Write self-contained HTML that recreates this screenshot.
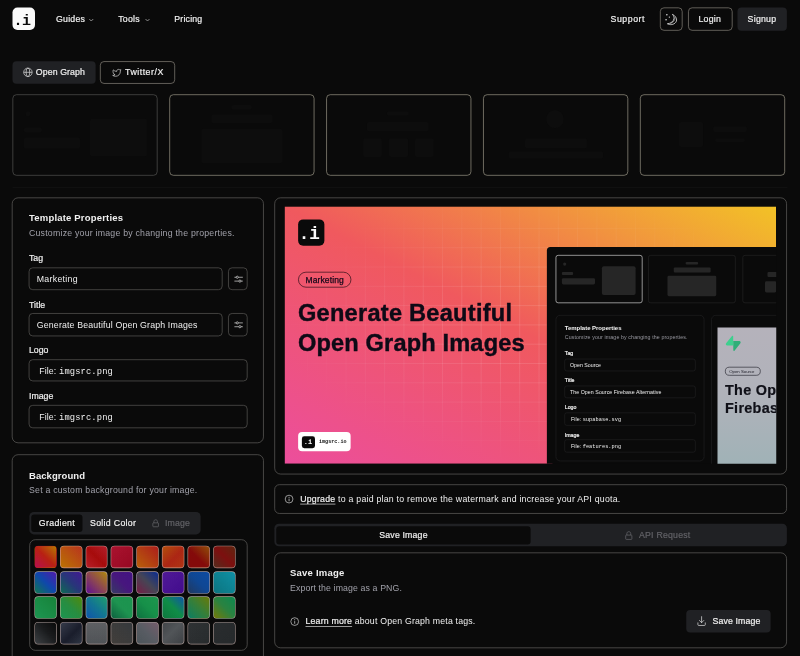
<!DOCTYPE html>
<html lang="en">
<head>
<meta charset="utf-8">
<title>imgsrc - Open Graph Image Generator</title>
<style>
html,body{margin:0;padding:0;background:#0a0a0a;overflow:hidden;}
body{width:800px;height:656px;position:relative;}
.s{transform:scale(.625);transform-origin:0 0;width:1280px;height:1050px;position:absolute;left:0;top:0;}
.z{zoom:1.6;width:800px;height:656px;position:relative;overflow:hidden;font-family:"Liberation Sans",sans-serif;color:#f0f0f0;font-size:8.75px;line-height:1;}
.z *{box-sizing:border-box;}
.a{position:absolute;white-space:nowrap;}
.mono{font-family:"Liberation Mono",monospace;}
.m{color:#a1a1aa;}
.w5{-webkit-text-stroke:0.2px currentColor;}
.bd{border:0.625px solid #2e2e30;}
.btn{position:absolute;border-radius:4px;height:22.5px;}
.panel{position:absolute;border:0.625px solid #6c6a66;border-radius:6.2px;}
.inp{position:absolute;border:0.625px solid #64625e;border-radius:4px;height:22.75px;}
.lbl{position:absolute;font-size:8.75px;white-space:nowrap;}
.h{position:absolute;font-size:9.5px;font-weight:bold;white-space:nowrap;}
svg{position:absolute;overflow:visible;}
.thumb{position:absolute;top:94.25px;width:145px;height:81.25px;border:0.625px solid #aaa594;border-radius:4px;}
.f{position:absolute;background:#0d0d0d;border-radius:2px;}
.sw{position:absolute;width:22.4px;height:22.4px;border-radius:4px;border:0.9px solid rgba(215,190,185,.72);}
</style>
</head>
<body>
<div class="s"><div class="z">

<!-- HEADER -->
<div class="a" style="left:12.5px;top:7.5px;width:22.75px;height:22.75px;background:#fafafa;border-radius:5px;"></div>
<div class="a mono" id="logo_t" style="left:13.4px;top:11.6px;font-size:15px;font-weight:bold;color:#0a0a0a;line-height:19px;letter-spacing:-0.3px;">.i</div>
<div class="a w5" id="t_guides" style="left:56px;top:14.4px;letter-spacing:0.229px;">Guides</div>
<svg style="left:88.6px;top:17.4px" width="5" height="5" viewBox="0 0 10 10"><path d="M1 3 L5 7 L9 3" fill="none" stroke="#bdbdbd" stroke-width="1.4"/></svg>
<div class="a w5" id="t_tools" style="left:118.2px;top:14.4px;letter-spacing:0.264px;">Tools</div>
<svg style="left:144.8px;top:17.4px" width="5" height="5" viewBox="0 0 10 10"><path d="M1 3 L5 7 L9 3" fill="none" stroke="#bdbdbd" stroke-width="1.4"/></svg>
<div class="a w5" id="t_pricing" style="left:174.2px;top:14.4px;letter-spacing:0.215px;">Pricing</div>
<div class="a w5" id="t_support" style="left:610.5px;top:14.4px;letter-spacing:0.550px;">Support</div>
<div class="btn" style="left:660px;top:7.6px;width:22.6px;height:22.8px;border:0.625px solid #959186;"></div>
<div class="btn" style="left:688px;top:7.6px;width:44.5px;height:22.8px;border:0.625px solid #959186;"></div>
<div class="a w5" id="t_login" style="left:698.5px;top:14.4px;letter-spacing:0.217px;">Login</div>
<div class="btn" style="left:737.5px;top:7.6px;width:49.3px;height:22.8px;background:#202124;"></div>
<div class="a w5" id="t_signup" style="left:747.6px;top:14.4px;letter-spacing:0.249px;">Signup</div>

<!-- TABS -->
<div class="btn" style="left:12.5px;top:61.25px;width:83px;background:#202124;"></div>
<div class="a w5" id="t_ogt" style="left:35.8px;top:67.8px;letter-spacing:0.109px;">Open Graph</div>
<div class="btn" style="left:100px;top:61.25px;width:75px;border:0.625px solid #959186;"></div>
<div class="a w5" id="t_tw" style="left:125px;top:67.8px;letter-spacing:0.523px;">Twitter/X</div>

<!-- THUMBS -->
<div class="thumb" style="left:12.5px;border-color:#5c5c5a;"></div>
<div class="thumb" style="left:169.3px;"></div>
<div class="thumb" style="left:326.1px;"></div>
<div class="thumb" style="left:483.2px;"></div>
<div class="thumb" style="left:640px;"></div>

<div class="f" style="left:25.5px;top:111.5px;width:5px;height:5px;border-radius:3px;"></div>
<div class="f" style="left:24px;top:127.5px;width:18px;height:5px;"></div>
<div class="f" style="left:24px;top:137.5px;width:56px;height:11px;"></div>
<div class="f" style="left:90px;top:118.5px;width:57px;height:38px;"></div>
<div class="f" style="left:231.5px;top:105.3px;width:20.5px;height:4.2px;"></div>
<div class="f" style="left:211.5px;top:114.5px;width:61px;height:8.7px;"></div>
<div class="f" style="left:201.3px;top:128.5px;width:81px;height:34.6px;"></div>
<div class="f" style="left:387px;top:111px;width:22px;height:4.5px;"></div>
<div class="f" style="left:367px;top:122px;width:62px;height:9px;"></div>
<div class="f" style="left:363px;top:138px;width:19px;height:19px;"></div>
<div class="f" style="left:389px;top:138px;width:19px;height:19px;"></div>
<div class="f" style="left:415px;top:138px;width:19px;height:19px;"></div>
<div class="f" style="left:546px;top:110px;width:18px;height:18px;border-radius:9px;"></div>
<div class="f" style="left:525px;top:138px;width:62px;height:10px;"></div>
<div class="f" style="left:509px;top:151px;width:94px;height:8px;"></div>
<div class="f" style="left:679px;top:122px;width:24px;height:25px;"></div>
<div class="f" style="left:713px;top:126px;width:34px;height:6px;"></div>
<div class="f" style="left:715px;top:138px;width:30px;height:4px;"></div>
<div class="a" style="left:12.5px;top:186.7px;width:775px;height:0.7px;background:#171717;"></div>

<!-- LEFT PANEL 1 -->
<div class="panel" style="left:12px;top:197.4px;width:252px;height:245.8px;"></div>
<div class="h" id="t_tp" style="left:29px;top:213px;letter-spacing:0.194px;">Template Properties</div>
<div class="lbl m" id="t_cust" style="left:29px;top:229px;letter-spacing:0.222px;">Customize your image by changing the properties.</div>

<div class="lbl w5" style="left:29px;top:253.6px;">Tag</div>
<div class="inp" style="left:29px;top:267.4px;width:193.6px;"></div>
<div class="lbl" id="t_mk" style="left:36.8px;top:274.4px;letter-spacing:0.286px;">Marketing</div>
<div class="inp" style="left:228.3px;top:267.4px;width:19.4px;"></div>

<div class="lbl w5" style="left:29px;top:299.8px;">Title</div>
<div class="inp" style="left:29px;top:313.4px;width:193.6px;"></div>
<div class="lbl" id="t_gen" style="left:36.8px;top:320.4px;letter-spacing:0.169px;">Generate Beautiful Open Graph Images</div>
<div class="inp" style="left:228.3px;top:313.4px;width:19.4px;"></div>

<div class="lbl w5" style="left:29px;top:345.6px;">Logo</div>
<div class="inp" style="left:29px;top:359.1px;width:218.7px;height:22.4px;"></div>
<div class="lbl" id="t_file1" style="left:39.2px;top:366.2px;letter-spacing:0.142px;">File: <span class="mono">imgsrc.png</span></div>

<div class="lbl w5" style="left:29px;top:391.6px;">Image</div>
<div class="inp" style="left:29px;top:405.2px;width:218.7px;height:23px;"></div>
<div class="lbl" id="t_file2" style="left:39.2px;top:412.2px;letter-spacing:0.142px;">File: <span class="mono">imgsrc.png</span></div>

<!-- LEFT PANEL 2 -->
<div class="panel" style="left:12px;top:454.4px;width:252px;height:230px;"></div>
<div class="h" id="t_bg" style="left:29px;top:470.9px;letter-spacing:0.062px;">Background</div>
<div class="lbl m" id="t_set" style="left:29px;top:485.2px;letter-spacing:0.218px;">Set a custom background for your image.</div>
<div class="a" style="left:29.25px;top:511.75px;width:171.3px;height:22.5px;background:#202124;border-radius:4.5px;"></div>
<div class="a" style="left:31.4px;top:514.2px;width:51.2px;height:17.6px;background:#0a0a0a;border-radius:3px;"></div>
<div class="a w5" id="t_grad" style="left:38.8px;top:518.4px;letter-spacing:0.336px;">Gradient</div>
<div class="a w5" id="t_solid" style="left:90px;top:518.4px;letter-spacing:0.314px;">Solid Color</div>
<div class="a w5" id="t_img" style="left:165px;top:518.4px;color:#626267;letter-spacing:0.135px;">Image</div>
<div class="a bd" style="left:29.25px;top:539.2px;width:218.4px;height:111.6px;border-radius:6px;border-color:#6c6a66;"></div>
<!--SW0-->
<div class="sw" style="left:34.30px;top:545.60px;background:linear-gradient(rgba(10,10,10,.13),rgba(10,10,10,.13)),linear-gradient(to top right,#d0105a,#d22414 50%,#d08a00);border-color:rgba(0,0,0,0);"></div>
<div class="sw" style="left:59.82px;top:545.60px;background:linear-gradient(rgba(10,10,10,.13),rgba(10,10,10,.13)),linear-gradient(to top right,#d48200,#d23a22);"></div>
<div class="sw" style="left:85.34px;top:545.60px;background:linear-gradient(rgba(10,10,10,.13),rgba(10,10,10,.13)),linear-gradient(to top right,#d0222c,#be0c0c 50%,#cc2230);"></div>
<div class="sw" style="left:110.86px;top:545.60px;background:linear-gradient(rgba(10,10,10,.13),rgba(10,10,10,.13)),linear-gradient(to bottom right,#c21434,#ac0826);"></div>
<div class="sw" style="left:136.38px;top:545.60px;background:linear-gradient(rgba(10,10,10,.13),rgba(10,10,10,.13)),linear-gradient(to top right,#d26c0a,#c4201e);"></div>
<div class="sw" style="left:161.90px;top:545.60px;background:linear-gradient(rgba(10,10,10,.13),rgba(10,10,10,.13)),linear-gradient(to bottom right,#cc5a0c,#c42a16 55%,#c83c14);"></div>
<div class="sw" style="left:187.42px;top:545.60px;background:linear-gradient(rgba(10,10,10,.13),rgba(10,10,10,.13)),linear-gradient(to top right,#960a0a 45%,#a45a08);"></div>
<div class="sw" style="left:212.94px;top:545.60px;background:linear-gradient(rgba(10,10,10,.13),rgba(10,10,10,.13)),linear-gradient(to top right,#5e3220,#8e1010 50%,#6a2a10);"></div>
<div class="sw" style="left:34.30px;top:571.20px;background:linear-gradient(rgba(10,10,10,.13),rgba(10,10,10,.13)),linear-gradient(to top right,#10885e,#1050c4 50%,#5a1cc4);"></div>
<div class="sw" style="left:59.82px;top:571.20px;background:linear-gradient(rgba(10,10,10,.13),rgba(10,10,10,.13)),linear-gradient(to top right,#0e7a5e,#2c3c8a 50%,#4a1ca6);"></div>
<div class="sw" style="left:85.34px;top:571.20px;background:linear-gradient(rgba(10,10,10,.13),rgba(10,10,10,.13)),linear-gradient(to top right,#6c10a8,#a0505c 50%,#c49a0c);"></div>
<div class="sw" style="left:110.86px;top:571.20px;background:linear-gradient(rgba(10,10,10,.13),rgba(10,10,10,.13)),linear-gradient(to top right,#3c4270,#50188e 50%,#4c1496);"></div>
<div class="sw" style="left:136.38px;top:571.20px;background:linear-gradient(rgba(10,10,10,.13),rgba(10,10,10,.13)),linear-gradient(to top right,#86204e,#4e4e60 50%,#0c30a4);"></div>
<div class="sw" style="left:161.90px;top:571.20px;background:linear-gradient(rgba(10,10,10,.13),rgba(10,10,10,.13)),linear-gradient(to bottom right,#5a1cac,#4a0ca0);"></div>
<div class="sw" style="left:187.42px;top:571.20px;background:linear-gradient(rgba(10,10,10,.13),rgba(10,10,10,.13)),linear-gradient(to top right,#24406c,#1050a8 50%,#0e54b8);"></div>
<div class="sw" style="left:212.94px;top:571.20px;background:linear-gradient(rgba(10,10,10,.13),rgba(10,10,10,.13)),linear-gradient(to top right,#0c8490,#10a4bc);"></div>
<div class="sw" style="left:34.30px;top:596.50px;background:linear-gradient(rgba(10,10,10,.13),rgba(10,10,10,.13)),linear-gradient(to top right,#20aa5c,#189440);"></div>
<div class="sw" style="left:59.82px;top:596.50px;background:linear-gradient(rgba(10,10,10,.13),rgba(10,10,10,.13)),linear-gradient(to top right,#1eaa5c,#2ca048 50%,#5a9c0c);"></div>
<div class="sw" style="left:85.34px;top:596.50px;background:linear-gradient(rgba(10,10,10,.13),rgba(10,10,10,.13)),linear-gradient(to top right,#1060c4,#1486a6 50%,#22b47c);"></div>
<div class="sw" style="left:110.86px;top:596.50px;background:linear-gradient(rgba(10,10,10,.13),rgba(10,10,10,.13)),linear-gradient(to top right,#0e6e48,#20a85a 50%,#1ea858);"></div>
<div class="sw" style="left:136.38px;top:596.50px;background:linear-gradient(rgba(10,10,10,.13),rgba(10,10,10,.13)),linear-gradient(to top right,#0e8048,#18a452 50%,#20aa58);"></div>
<div class="sw" style="left:161.90px;top:596.50px;background:linear-gradient(rgba(10,10,10,.13),rgba(10,10,10,.13)),linear-gradient(to top right,#0e8846,#10a050 50%,#1060c4);"></div>
<div class="sw" style="left:187.42px;top:596.50px;background:linear-gradient(rgba(10,10,10,.13),rgba(10,10,10,.13)),linear-gradient(to top right,#0c9070,#3c9040 50%,#788a08);"></div>
<div class="sw" style="left:212.94px;top:596.50px;background:linear-gradient(rgba(10,10,10,.13),rgba(10,10,10,.13)),linear-gradient(to top right,#848a08,#309448 50%,#0e9a5a);"></div>
<div class="sw" style="left:34.30px;top:621.90px;background:linear-gradient(rgba(10,10,10,.13),rgba(10,10,10,.13)),linear-gradient(to top right,#44484c,#1c1e20 55%,#0a0a0a);"></div>
<div class="sw" style="left:59.82px;top:621.90px;background:linear-gradient(rgba(10,10,10,.13),rgba(10,10,10,.13)),linear-gradient(to bottom right,#3c4254,#1c2030 55%,#343c4c);"></div>
<div class="sw" style="left:85.34px;top:621.90px;background:linear-gradient(rgba(10,10,10,.13),rgba(10,10,10,.13)),linear-gradient(to bottom,#6a6c70,#5a5e62);"></div>
<div class="sw" style="left:110.86px;top:621.90px;background:linear-gradient(rgba(10,10,10,.13),rgba(10,10,10,.13)),linear-gradient(to top right,#4a4642,#3c4044);"></div>
<div class="sw" style="left:136.38px;top:621.90px;background:linear-gradient(rgba(10,10,10,.13),rgba(10,10,10,.13)),linear-gradient(to top right,#566066,#646870 50%,#84687a);"></div>
<div class="sw" style="left:161.90px;top:621.90px;background:linear-gradient(rgba(10,10,10,.13),rgba(10,10,10,.13)),linear-gradient(to bottom right,#4a4e52,#5c6064 45%,#44484c);"></div>
<div class="sw" style="left:187.42px;top:621.90px;background:linear-gradient(rgba(10,10,10,.13),rgba(10,10,10,.13)),linear-gradient(to bottom right,#34383a,#2c3032);"></div>
<div class="sw" style="left:212.94px;top:621.90px;background:linear-gradient(rgba(10,10,10,.13),rgba(10,10,10,.13)),linear-gradient(to bottom right,#2e3234,#2a2e30);"></div>
<!--SW1-->


<!-- RIGHT -->
<div class="panel" style="left:274.2px;top:197.4px;width:512.5px;height:277.2px;"></div>
<!-- OG IMAGE -->
<div class="a" id="og" style="left:284.5px;top:206.5px;width:491.5px;height:257.5px;overflow:hidden;">
  <div class="a" style="left:0;top:0;width:100%;height:100%;background:linear-gradient(to top right,#ec4e9c 0%,#f0595e 50%,#f2c226 100%);clip-path:polygon(0 0,100% 0,100% 46px,268px 46px,268px 100%,0 100%);"></div>
  <div class="a" style="left:0;top:0;width:100%;height:100%;background-image:linear-gradient(to right,rgba(255,255,255,.11) 0.6px,transparent 0.6px),linear-gradient(to bottom,rgba(255,255,255,.11) 0.6px,transparent 0.6px);background-size:19.3px 19.3px;background-position:3.3px 2.4px;-webkit-mask-image:radial-gradient(ellipse 52% 54% at 50% 46%,#000 30%,transparent 100%);mask-image:radial-gradient(ellipse 52% 54% at 50% 46%,#000 30%,transparent 100%);"></div>
  <!-- logo -->
  <div class="a" style="left:13.7px;top:13px;width:26px;height:26.4px;background:#0a0a0a;border-radius:5px;"></div>
  <div class="a mono" id="oglogo_t" style="left:14.3px;top:17.6px;font-size:17.6px;font-weight:bold;color:#fafafa;line-height:21px;letter-spacing:-0.2px;">.i</div>
  <!-- tag -->
  <div class="a" style="left:13.7px;top:65.4px;width:52.8px;height:15.8px;border:1.1px solid #16060f;border-radius:8px;"></div>
  <div class="a" id="t_ogtag" style="left:21px;top:69px;font-size:8.5px;color:#14081a;letter-spacing:0.12px;-webkit-text-stroke:0.25px #14081a;">Marketing</div>
  <!-- title -->
  <div class="a" id="t_og1" style="left:13.5px;top:92.3px;font-size:23.6px;font-weight:bold;color:#0e0a16;-webkit-text-stroke:0.4px #0e0a16;letter-spacing:0.25px;line-height:29.75px;">Generate Beautiful</div>
  <div class="a" id="t_og2" style="left:13.5px;top:122.05px;font-size:23.6px;font-weight:bold;color:#0e0a16;-webkit-text-stroke:0.4px #0e0a16;letter-spacing:0.15px;line-height:29.75px;">Open Graph Images</div>
  <!-- watermark -->
  <div class="a" style="left:13.5px;top:225.5px;width:52.4px;height:19.4px;background:#fff;border-radius:4px;"></div>
  <div class="a" style="left:17.5px;top:229.5px;width:13px;height:12px;background:#0a0a0a;border-radius:2.4px;"></div>
  <div class="a mono" style="left:19.3px;top:231.6px;font-size:7px;font-weight:bold;color:#fff;line-height:8px;">.i</div>
  <div class="a mono" style="left:34.5px;top:232.2px;font-size:5.1px;font-weight:bold;color:#111;line-height:6px;">imgsrc.io</div>
  <div class="a" id="nest" style="left:262.5px;top:40.1px;width:240px;height:230px;background:#0a0a0a;border-top-left-radius:3.5px;overflow:hidden;">
    <!-- thumbs -->
    <div class="a" style="left:8.4px;top:8.5px;width:87.2px;height:48px;border:0.8px solid #e4e4e4;border-radius:2.5px;"></div>
    <div class="a" style="left:16px;top:16.2px;width:3px;height:3px;border-radius:2px;background:#262626;"></div>
    <div class="a" style="left:15px;top:25.4px;width:11px;height:3px;border-radius:1px;background:#262626;"></div>
    <div class="a" style="left:15px;top:31.4px;width:33px;height:6.6px;border-radius:1.4px;background:#262626;"></div>
    <div class="a" style="left:54.6px;top:19.8px;width:34px;height:28.6px;border-radius:2px;background:#262626;"></div>
    <div class="a" style="left:101.4px;top:8.5px;width:87.4px;height:48px;border:0.625px solid #262626;border-radius:2.5px;"></div>
    <div class="a" style="left:138.9px;top:15.1px;width:12.3px;height:2.5px;border-radius:1px;background:#262626;"></div>
    <div class="a" style="left:126.8px;top:20.6px;width:36.8px;height:5.2px;border-radius:1px;background:#262626;"></div>
    <div class="a" style="left:120.7px;top:29px;width:48.5px;height:20.8px;border-radius:1.4px;background:#262626;"></div>
    <div class="a" style="left:195.2px;top:8.5px;width:87.4px;height:48px;border:0.625px solid #262626;border-radius:2.5px;"></div>
    <div class="a" style="left:220.4px;top:25.3px;width:20px;height:5.2px;border-radius:1px;background:#262626;"></div>
    <div class="a" style="left:217.8px;top:34.6px;width:11.4px;height:11.4px;border-radius:1.4px;background:#262626;"></div>
    <!-- panel -->
    <div class="a" style="left:8.4px;top:68.7px;width:149.2px;height:146px;border:0.625px solid #222224;border-radius:4.5px;"></div>
    <div class="a" id="n_tp" style="left:17.8px;top:78.4px;font-size:6px;font-weight:bold;color:#f4f4f4;letter-spacing:-0.027px;">Template Properties</div>
    <div class="a" id="n_cu" style="left:17.8px;top:88.4px;font-size:5.25px;color:#9a9aa2;letter-spacing:0.123px;">Customize your image by changing the properties.</div>
    <div class="a w5" style="left:17.8px;top:104px;font-size:5.25px;">Tag</div>
    <div class="a" style="left:17.5px;top:112.1px;width:131px;height:12.8px;border:0.625px solid #222224;border-radius:2.4px;"></div>
    <div class="a" id="n_os" style="left:23px;top:115.8px;font-size:5.25px;letter-spacing:0.008px;">Open Source</div>
    <div class="a w5" style="left:17.8px;top:131.1px;font-size:5.25px;">Title</div>
    <div class="a" style="left:17.5px;top:138.9px;width:131px;height:12.8px;border:0.625px solid #222224;border-radius:2.4px;"></div>
    <div class="a" id="n_ti" style="left:23px;top:142.8px;font-size:5.25px;letter-spacing:0.061px;">The Open Source Firebase Alternative</div>
    <div class="a w5" style="left:17.8px;top:158.2px;font-size:5.25px;">Logo</div>
    <div class="a" style="left:17.5px;top:166.2px;width:131px;height:12.8px;border:0.625px solid #222224;border-radius:2.4px;"></div>
    <div class="a" id="n_f1" style="left:24px;top:170.2px;font-size:5.25px;letter-spacing:0.059px;">File: <span class="mono">supabase.svg</span></div>
    <div class="a w5" style="left:17.8px;top:185.6px;font-size:5.25px;">Image</div>
    <div class="a" style="left:17.5px;top:193px;width:131px;height:13.2px;border:0.625px solid #222224;border-radius:2.4px;"></div>
    <div class="a" id="n_f2" style="left:24px;top:197.2px;font-size:5.25px;letter-spacing:0.059px;">File: <span class="mono">features.png</span></div>
    <!-- right panel -->
    <div class="a" style="left:164px;top:68.7px;width:120px;height:160px;border:0.625px solid #222224;border-radius:4.5px;"></div>
    <div class="a" style="left:170.2px;top:80.7px;width:80px;height:150px;background:linear-gradient(to bottom,#b5b2bb 0%,#b0b2ba 45%,#9db2b6 100%);"></div>
    <svg style="left:177.7px;top:89.2px" width="16.5" height="15.4" viewBox="0 0 109 113"><path d="M63.7 110.3c-2.9 3.6-8.7 1.6-8.7-3l-1-67.3h45.2c8.2 0 12.8 9.500 7.700 15.900z" fill="#2fae78"/><path d="M45.300 2.100c2.900-3.600 8.700-1.600 8.700 3l.4 67.300H9.800c-8.200 0-12.800-9.500-7.700-15.900z" fill="#3ecf8e"/></svg>
    <div class="a" style="left:177.8px;top:120.2px;width:36px;height:8.8px;border:0.5px solid #20202a;border-radius:4.4px;"></div>
    <div class="a" style="left:182.2px;top:122.5px;font-size:4.3px;color:#20202a;">Open Source</div>
    <div class="a" style="left:178px;top:134.5px;font-size:14.4px;font-weight:bold;color:#101018;letter-spacing:0.3px;-webkit-text-stroke:0.2px #101018;line-height:17.8px;">The Open</div>
    <div class="a" style="left:178px;top:152.3px;font-size:14.4px;font-weight:bold;color:#101018;letter-spacing:0.3px;-webkit-text-stroke:0.2px #101018;line-height:17.8px;">Firebase</div>
  </div>

</div>

<!-- UPGRADE BAR -->
<div class="panel" style="left:274.2px;top:484.25px;width:512.5px;height:29.3px;border-radius:5px;"></div>
<svg style="left:284.4px;top:494.4px" width="9.4" height="9.4" viewBox="0 0 15 15"><circle cx="7.5" cy="7.5" r="6.2" fill="none" stroke="#d4d4d4" stroke-width="1.1"/><path d="M7.5 6.8 V11" stroke="#d4d4d4" stroke-width="1.2" fill="none"/><circle cx="7.5" cy="4.6" r="0.8" fill="#d4d4d4"/></svg>
<div class="a" id="t_upg" style="left:300.2px;top:494.6px;letter-spacing:0.236px;"><span class="w5" style="text-decoration:underline;text-underline-offset:1.6px;text-decoration-thickness:0.6px;">Upgrade</span> to a paid plan to remove the watermark and increase your API quota.</div>

<!-- SAVE TABS -->
<div class="a" style="left:274.2px;top:524px;width:512.5px;height:22.5px;background:#202124;border-radius:4.5px;"></div>
<div class="a" style="left:276.4px;top:526.4px;width:254px;height:17.7px;background:#0a0a0a;border-radius:3px;"></div>
<div class="a w5" id="t_tab1" style="left:379.3px;top:530.8px;letter-spacing:0.170px;">Save Image</div>
<div class="a w5" id="t_tab2" style="left:639px;top:530.8px;color:#626267;letter-spacing:0.216px;">API Request</div>

<!-- SAVE PANEL -->
<div class="panel" style="left:274.2px;top:552.3px;width:512.5px;height:96px;"></div>
<div class="h" id="t_save" style="left:290px;top:568.4px;letter-spacing:0.225px;">Save Image</div>
<div class="lbl m" id="t_exp" style="left:290px;top:583.2px;letter-spacing:0.118px;">Export the image as a PNG.</div>
<svg style="left:289.7px;top:616.9px" width="9.4" height="9.4" viewBox="0 0 15 15"><circle cx="7.5" cy="7.5" r="6.2" fill="none" stroke="#d4d4d4" stroke-width="1.1"/><path d="M7.5 6.8 V11" stroke="#d4d4d4" stroke-width="1.2" fill="none"/><circle cx="7.5" cy="4.6" r="0.8" fill="#d4d4d4"/></svg>
<div class="a" id="t_learn" style="left:305.5px;top:616.6px;letter-spacing:0.185px;"><span class="w5" style="text-decoration:underline;text-underline-offset:1.6px;text-decoration-thickness:0.6px;">Learn more</span> about Open Graph meta tags.</div>
<div class="btn" style="left:686.3px;top:610.2px;width:84.4px;height:22.4px;background:#202124;"></div>
<div class="a w5" id="t_savebtn" style="left:712.5px;top:617px;letter-spacing:0.120px;">Save Image</div>


<!-- ICONS -->
<svg style="left:23.1px;top:67.7px" width="9.6" height="9.6" viewBox="0 0 15 15" fill="none" stroke="#e4e4e4" stroke-width="1.05"><circle cx="7.5" cy="7.5" r="6.6"/><ellipse cx="7.5" cy="7.5" rx="2.9" ry="6.6"/><path d="M1 7.5H14"/></svg>
<svg style="left:111.6px;top:68px" width="9.8" height="9.4" viewBox="0 0 15 15" fill="none" stroke="#e4e4e4" stroke-width="1.05" stroke-linejoin="round"><path d="M7.3 5.3 C7.2 3.4 8.6 2 10.3 2 C11.3 2 12 2.400 12.500 3 L14.200 2.500 L13.300 4.400 C13.500 9.800 10 13 5.600 13 C3.800 13 2.200 12.500 1 11.600 C2.500 11.700 3.800 11.300 4.800 10.500 C3.300 10.200 2.400 9.200 2.100 8 C1.200 6 1.400 4 2 2.800 C3.300 4.300 5.200 5.200 7.300 5.300 Z"/></svg>
<svg style="left:664px;top:11px" width="15" height="15" viewBox="0 0 15 15"><path d="M8.600 3.100 C11.900 4.500 14 8 12.100 11 C10.100 13.600 6.100 14 3.600 12.500 C7.200 12.300 10 10 10.300 7 C10.400 5.500 9.700 4.100 8.600 3.100 Z" fill="none" stroke="#ececec" stroke-width="0.75" stroke-linejoin="round"/><path d="M6.500 12.300 C9.500 11.500 11.400 9 11.300 6" fill="none" stroke="#ececec" stroke-width="0.5"/><circle cx="3.100" cy="3.500" r="0.75" fill="#ececec"/><circle cx="5.600" cy="5.800" r="0.65" fill="#ececec"/><circle cx="2.300" cy="8.500" r="0.75" fill="#ececec"/></svg>
<svg style="left:233.5px;top:274.1px" width="9.6" height="9.6" viewBox="0 0 15 15" fill="none" stroke="#e4e4e4" stroke-width="1.05"><path d="M7.300 4.500H14.200M1 4.500H3.700"/><circle cx="5.500" cy="4.500" r="1.700"/><path d="M1 10.500H7.700M11.400 10.500H14.200"/><circle cx="9.600" cy="10.500" r="1.700"/></svg>
<svg style="left:233.500px;top:320.1px" width="9.6" height="9.6" viewBox="0 0 15 15" fill="none" stroke="#e4e4e4" stroke-width="1.05"><path d="M7.300 4.500H14.200M1 4.500H3.700"/><circle cx="5.500" cy="4.500" r="1.700"/><path d="M1 10.500H7.700M11.400 10.500H14.200"/><circle cx="9.600" cy="10.500" r="1.700"/></svg>
<svg style="left:152.400px;top:519.1px" width="6.300" height="7.800" viewBox="0 0 6.300 7.800" fill="none" stroke="#6e6e73" stroke-width="0.65"><rect x="0.350" y="3.500" width="5.600" height="3.900" rx="0.600"/><path d="M1.400 3.500V2.100C1.400 1.100 2.100 0.400 3.150 0.400C4.200 0.400 4.900 1.100 4.900 2.100V3.500"/></svg>
<svg style="left:625px;top:531.3px" width="7.600" height="8.600" viewBox="0 0 6.300 7.800" fill="none" stroke="#6e6e73" stroke-width="0.6"><rect x="0.350" y="3.500" width="5.600" height="3.900" rx="0.600"/><path d="M1.400 3.500V2.100C1.400 1.100 2.100 0.400 3.150 0.400C4.200 0.400 4.900 1.100 4.900 2.100V3.500"/></svg>
<svg style="left:697.600px;top:616.5px" width="8.200" height="9.600" viewBox="0 0 8.200 9.600" fill="none" stroke="#e4e4e4" stroke-width="0.7" stroke-linecap="round" stroke-linejoin="round"><path d="M4.100 0.400V6.300M1.900 4.200L4.100 6.400L6.300 4.200"/><path d="M0.400 6.600V8.400C0.400 8.900 0.700 9.200 1.200 9.200H7C7.500 9.200 7.800 8.900 7.800 8.400V6.600"/></svg>

</div></div>
</body>
</html>
